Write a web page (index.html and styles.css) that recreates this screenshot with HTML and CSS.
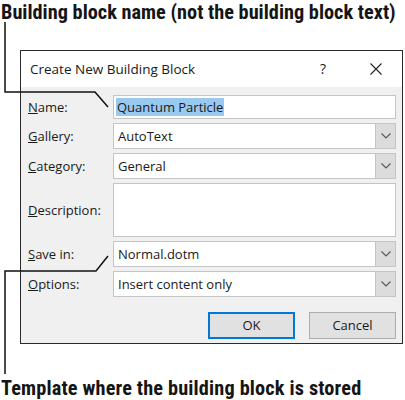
FILE: index.html
```html
<!DOCTYPE html>
<html lang="en">
<head>
  <meta charset="UTF-8">
  <title>Create New Building Block</title>
  <link rel="stylesheet" href="styles.css">
</head>
<body>

  <div class="page">
    <div class="caption caption-top">Building block name (not the building block text)</div>

    <div class="dialog">
      <div class="titlebar">
        <span class="title">Create New Building Block</span>
        <span class="help">?</span>
        <svg class="close" width="12" height="12" viewBox="0 0 12 12">
          <path d="M0.5 0.5 L11.5 11.5 M11.5 0.5 L0.5 11.5" stroke="#222" stroke-width="1.1" fill="none"/>
        </svg>
      </div>

      <div class="body">
        <label class="lbl"><u>N</u>ame:</label>
        <div class="field field-name"><span class="selected">Quantum Particle</span></div>

        <label class="lbl"><u>G</u>allery:</label>
        <div class="field combo"><span class="val">AutoText</span><span class="drop"><svg width="10" height="6" viewBox="0 0 10 6"><path d="M0.5 0.5 L5 5 L9.5 0.5" stroke="#555" stroke-width="1.1" fill="none"/></svg></span></div>

        <label class="lbl"><u>C</u>ategory:</label>
        <div class="field combo"><span class="val">General</span><span class="drop"><svg width="10" height="6" viewBox="0 0 10 6"><path d="M0.5 0.5 L5 5 L9.5 0.5" stroke="#555" stroke-width="1.1" fill="none"/></svg></span></div>

        <label class="lbl lbl-desc"><u>D</u>escription:</label>
        <div class="field field-desc"></div>

        <label class="lbl"><u>S</u>ave in:</label>
        <div class="field combo"><span class="val">Normal.dotm</span><span class="drop"><svg width="10" height="6" viewBox="0 0 10 6"><path d="M0.5 0.5 L5 5 L9.5 0.5" stroke="#555" stroke-width="1.1" fill="none"/></svg></span></div>

        <label class="lbl"><u>O</u>ptions:</label>
        <div class="field combo"><span class="val">Insert content only</span><span class="drop"><svg width="10" height="6" viewBox="0 0 10 6"><path d="M0.5 0.5 L5 5 L9.5 0.5" stroke="#555" stroke-width="1.1" fill="none"/></svg></span></div>

        <div class="buttons">
          <button class="btn btn-ok">OK</button>
          <button class="btn">Cancel</button>
        </div>
      </div>
    </div>

    <div class="caption caption-bottom">Template where the building block is stored</div>

    <!-- callout lines -->
    <svg class="callouts" width="405" height="400" viewBox="0 0 405 400">
      <polyline points="5,22 5,92 95,92 108,107" stroke="#111" stroke-width="1.5" fill="none"/>
      <polyline points="108,256 96,271 5,271 5,374" stroke="#111" stroke-width="1.5" fill="none"/>
    </svg>
  </div>

</body>
</html>
```

FILE: styles.css
```css
body {
  margin: 0;
  background-color: white;
  font-family: "Open Sans", "Noto Sans", sans-serif;
}
.page {
  position: relative;
  width: 405px;
  height: 400px;
  display: flex;
  flex-direction: column;
}
.caption {
  font-family: "Roboto Condensed", "DejaVu Sans Condensed", Roboto, sans-serif;
  font-stretch: condensed;
  font-weight: 700;
  font-size: 20.3px;
  color: #151515;
  white-space: nowrap;
  padding-left: 1px;
}
.caption-top {
  height: 50px;
  line-height: 24px;
}
.caption-bottom {
  margin-top: 32px;
  line-height: 24px;
  letter-spacing: 0.15px;
}
.dialog {
  margin-left: 20px;
  width: 381px;
  height: 295px;
  border: 1px solid #2b2b2b;
  background-color: #f0f0f0;
}
.titlebar {
  height: 36px;
  background-color: white;
  display: flex;
  align-items: center;
  padding-left: 9px;
  font-size: 13.5px;
  color: #1a1a1a;
}
.title {
  flex: 1;
}
.help {
  font-size: 14px;
  margin-right: 44px;
}
.close {
  margin-right: 20px;
}
.body {
  display: grid;
  grid-template-columns: 85px 283px;
  grid-template-rows: 24px 26px 26px 54px 26px 26px;
  row-gap: 4px;
  padding: 8px 6px 0 7px;
  font-size: 13px;
  color: #1a1a1a;
}
.lbl {
  display: flex;
  align-items: center;
}
.field {
  box-sizing: border-box;
  background-color: white;
  border: 1px solid #c4c4c4;
  display: flex;
  align-items: center;
}
.field-name {
  padding-left: 2px;
}
.selected {
  background-color: #99c9ef;
  padding: 1px;
  line-height: 16px;
}
.combo .val {
  flex: 1;
  padding-left: 4px;
}
.drop {
  width: 19px;
  height: 100%;
  background-color: #dcdcdc;
  border-left: 1px solid #c4c4c4;
  display: flex;
  align-items: center;
  justify-content: center;
}
.buttons {
  grid-column: 1 / 3;
  display: flex;
  justify-content: flex-end;
  gap: 14px;
  padding-top: 11px;
}
.btn {
  box-sizing: border-box;
  width: 87px;
  height: 27px;
  background-color: #e1e1e1;
  border: 1px solid #adadad;
  font-family: "Open Sans", "Noto Sans", sans-serif;
  font-size: 13px;
  color: #1a1a1a;
  padding: 0;
}
.btn-ok {
  border: 2px solid #0078d7;
}
.callouts {
  position: absolute;
  left: 0;
  top: 0;
}
```
